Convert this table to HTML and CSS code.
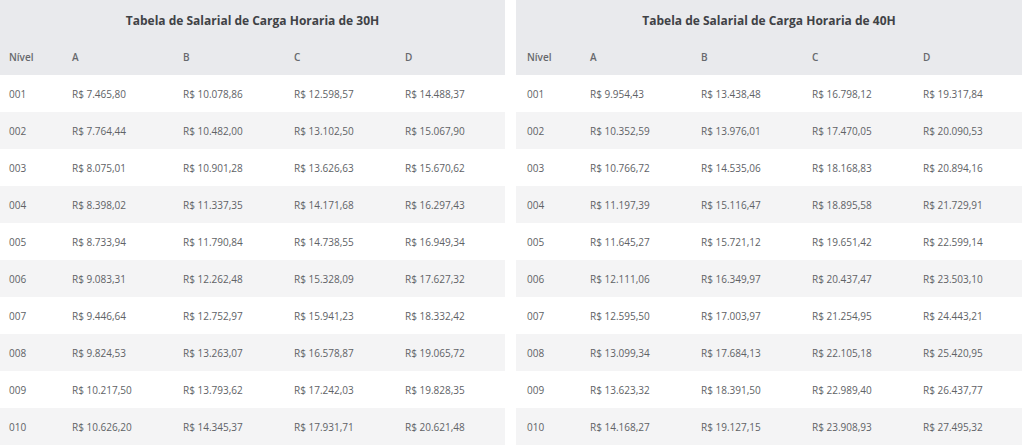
FILE: index.html
```html
<!DOCTYPE html>
<html lang="pt-BR">
<head>
<meta charset="utf-8">
<title>Tabelas Salariais</title>
<link rel="stylesheet" href="styles.css">
</head>
<body>
<div class="wrap">
  <table class="sal">
    <colgroup><col class="c-n"><col class="c-v"><col class="c-v"><col class="c-v"><col></colgroup>
    <thead>
      <tr class="title-row"><th colspan="5">Tabela de Salarial de Carga Horaria de 30H</th></tr>
      <tr class="head-row"><th>Nível</th><th>A</th><th>B</th><th>C</th><th>D</th></tr>
    </thead>
    <tbody>
      <tr><td>001</td><td>R$ 7.465,80</td><td>R$ 10.078,86</td><td>R$ 12.598,57</td><td>R$ 14.488,37</td></tr>
      <tr><td>002</td><td>R$ 7.764,44</td><td>R$ 10.482,00</td><td>R$ 13.102,50</td><td>R$ 15.067,90</td></tr>
      <tr><td>003</td><td>R$ 8.075,01</td><td>R$ 10.901,28</td><td>R$ 13.626,63</td><td>R$ 15.670,62</td></tr>
      <tr><td>004</td><td>R$ 8.398,02</td><td>R$ 11.337,35</td><td>R$ 14.171,68</td><td>R$ 16.297,43</td></tr>
      <tr><td>005</td><td>R$ 8.733,94</td><td>R$ 11.790,84</td><td>R$ 14.738,55</td><td>R$ 16.949,34</td></tr>
      <tr><td>006</td><td>R$ 9.083,31</td><td>R$ 12.262,48</td><td>R$ 15.328,09</td><td>R$ 17.627,32</td></tr>
      <tr><td>007</td><td>R$ 9.446,64</td><td>R$ 12.752,97</td><td>R$ 15.941,23</td><td>R$ 18.332,42</td></tr>
      <tr><td>008</td><td>R$ 9.824,53</td><td>R$ 13.263,07</td><td>R$ 16.578,87</td><td>R$ 19.065,72</td></tr>
      <tr><td>009</td><td>R$ 10.217,50</td><td>R$ 13.793,62</td><td>R$ 17.242,03</td><td>R$ 19.828,35</td></tr>
      <tr><td>010</td><td>R$ 10.626,20</td><td>R$ 14.345,37</td><td>R$ 17.931,71</td><td>R$ 20.621,48</td></tr>
    </tbody>
  </table>
  <table class="sal sal-right">
    <colgroup><col class="c-n"><col class="c-v"><col class="c-v"><col class="c-v"><col></colgroup>
    <thead>
      <tr class="title-row"><th colspan="5">Tabela de Salarial de Carga Horaria de 40H</th></tr>
      <tr class="head-row"><th>Nível</th><th>A</th><th>B</th><th>C</th><th>D</th></tr>
    </thead>
    <tbody>
      <tr><td>001</td><td>R$ 9.954,43</td><td>R$ 13.438,48</td><td>R$ 16.798,12</td><td>R$ 19.317,84</td></tr>
      <tr><td>002</td><td>R$ 10.352,59</td><td>R$ 13.976,01</td><td>R$ 17.470,05</td><td>R$ 20.090,53</td></tr>
      <tr><td>003</td><td>R$ 10.766,72</td><td>R$ 14.535,06</td><td>R$ 18.168,83</td><td>R$ 20.894,16</td></tr>
      <tr><td>004</td><td>R$ 11.197,39</td><td>R$ 15.116,47</td><td>R$ 18.895,58</td><td>R$ 21.729,91</td></tr>
      <tr><td>005</td><td>R$ 11.645,27</td><td>R$ 15.721,12</td><td>R$ 19.651,42</td><td>R$ 22.599,14</td></tr>
      <tr><td>006</td><td>R$ 12.111,06</td><td>R$ 16.349,97</td><td>R$ 20.437,47</td><td>R$ 23.503,10</td></tr>
      <tr><td>007</td><td>R$ 12.595,50</td><td>R$ 17.003,97</td><td>R$ 21.254,95</td><td>R$ 24.443,21</td></tr>
      <tr><td>008</td><td>R$ 13.099,34</td><td>R$ 17.684,13</td><td>R$ 22.105,18</td><td>R$ 25.420,95</td></tr>
      <tr><td>009</td><td>R$ 13.623,32</td><td>R$ 18.391,50</td><td>R$ 22.989,40</td><td>R$ 26.437,77</td></tr>
      <tr><td>010</td><td>R$ 14.168,27</td><td>R$ 19.127,15</td><td>R$ 23.908,93</td><td>R$ 27.495,32</td></tr>
    </tbody>
  </table>
</div>
</body>
</html>
```
FILE: styles.css
```css
html, body {
  margin: 0;
  padding: 0;
  background: #ffffff;
}
body {
  font-family: "Open Sans", "Noto Sans", sans-serif;
  color: #5f6165;
}
.wrap {
  display: grid;
  grid-template-columns: 505px 506px;
  column-gap: 11px;
  width: 1022px;
}
.sal {
  width: 100%;
  border-collapse: collapse;
  table-layout: fixed;
}
.c-n { width: 63px; }
.c-v { width: 111px; }
.sal th, .sal td {
  padding: 0 0 0 9px;
  text-align: left;
  white-space: nowrap;
  box-sizing: border-box;
}
.sal-right th, .sal-right td {
  padding-left: 11px;
}
.title-row th {
  height: 38px;
  text-align: center;
  font-size: 12px;
  font-weight: 700;
  color: #404246;
  background: #e9eaed;
  padding: 2px 0 0 0;
}
.sal-right .title-row th {
  padding: 2px 0 0 0;
}
.head-row th {
  height: 37px;
  font-size: 10px;
  font-weight: 600;
  color: #66686c;
  background: #e9eaed;
}
.sal td {
  height: 37px;
  font-size: 10px;
  font-weight: 400;
  color: #606266;
}
.sal tbody tr:nth-child(even) td {
  background: #f4f4f5;
}
```
